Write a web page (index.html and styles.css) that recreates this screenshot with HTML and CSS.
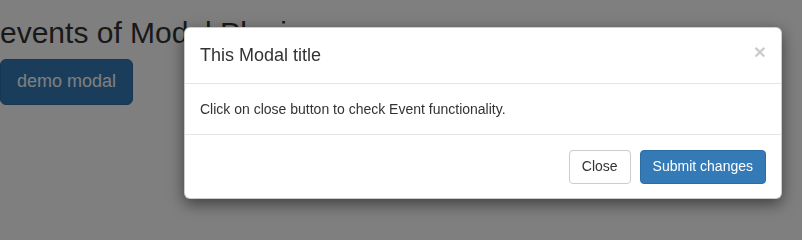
FILE: index.html
```html
<!DOCTYPE html>
<html lang="en">
<head>
<meta charset="utf-8">
<title>Modal events</title>
<link rel="stylesheet" href="styles.css">
</head>
<body>
<div class="page">
  <h2 class="page-title">events of Modal Plugin</h2>
  <button class="btn btn-primary btn-lg" type="button">demo modal</button>
</div>
<div class="backdrop"></div>
<div class="modal" role="dialog">
  <div class="modal-header">
    <h4 class="modal-title">This Modal title</h4>
    <button class="close" type="button" aria-label="Close">&times;</button>
  </div>
  <div class="modal-body">Click on close button to check Event functionality.</div>
  <div class="modal-footer">
    <button class="btn btn-default" type="button">Close</button>
    <button class="btn btn-primary" type="button">Submit changes</button>
  </div>
</div>
</body>
</html>
```
FILE: styles.css
```css
* { box-sizing: border-box; }
html, body { margin: 0; padding: 0; }
body {
  font-family: "Liberation Sans", Arial, Helvetica, sans-serif;
  font-size: 14px;
  line-height: 1.42857;
  color: #333;
  background: #fff;
  width: 802px;
  height: 235px;
  overflow: hidden;
}
.page { padding: 0; }
.page-title {
  margin: 16px 0 10px;
  font-size: 30px;
  font-weight: 500;
  line-height: 1.1;
  color: #333;
  white-space: nowrap;
}
.btn {
  display: inline-block;
  font-family: inherit;
  font-size: 14px;
  line-height: 1.42857;
  padding: 6px 12px;
  border: 1px solid transparent;
  border-radius: 4px;
  cursor: pointer;
  margin: 0;
}
.btn-lg {
  padding: 10px 16px;
  font-size: 18px;
  line-height: 1.3333;
  border-radius: 6px;
}
.btn-primary { background: #337ab7; border-color: #2e6da4; color: #fff; }
.btn-default { background: #fff; border-color: #ccc; color: #333; }
.backdrop {
  position: fixed;
  inset: 0;
  background: rgba(0, 0, 0, 0.5);
}
.modal {
  position: absolute;
  top: 27px;
  left: 184px;
  width: 598px;
  background: #fff;
  border: 1px solid rgba(0, 0, 0, 0.2);
  border-radius: 6px;
  box-shadow: 0 5px 15px rgba(0, 0, 0, 0.5);
}
.modal-header {
  display: flex;
  justify-content: space-between;
  align-items: flex-start;
  padding: 15px;
  border-bottom: 1px solid #e5e5e5;
}
.modal-title {
  margin: 0;
  font-size: 18px;
  font-weight: 500;
  line-height: 25px;
}
.close {
  background: none;
  border: 0;
  padding: 0;
  margin-top: -2px;
  font-family: inherit;
  font-size: 21px;
  font-weight: 700;
  line-height: 1;
  color: #000;
  opacity: 0.2;
  text-shadow: 0 1px 0 #fff;
  cursor: pointer;
}
.modal-body { padding: 15px; line-height: 20px; }
.modal-footer {
  display: flex;
  justify-content: flex-end;
  gap: 9px;
  padding: 15px 15px 14px;
  border-top: 1px solid #e5e5e5;
}
```
